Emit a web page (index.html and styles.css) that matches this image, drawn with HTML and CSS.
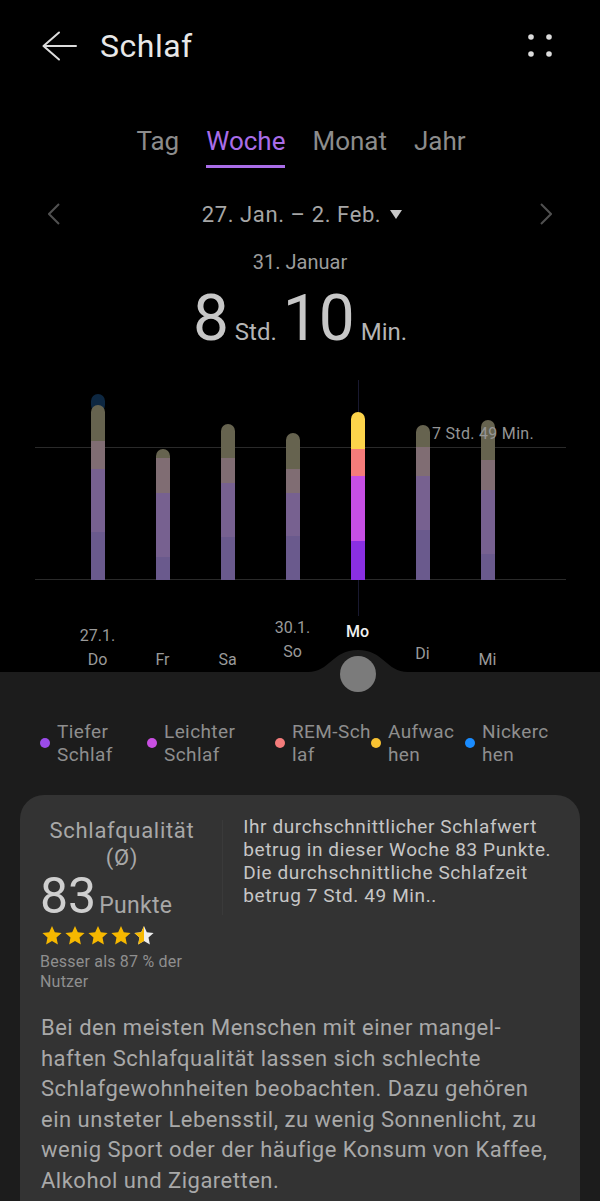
FILE: index.html
```html
<!DOCTYPE html>
<html lang="de">
<head>
    <meta charset="UTF-8">
    <meta name="viewport" content="width=device-width, initial-scale=1.0">
    <title>Schlaf</title>
    <link rel="stylesheet" href="styles.css">
</head>
<body>
    <!-- Top bar -->
    <header class="top-bar">
        <svg class="back-icon" width="36" height="32" viewBox="0 0 36 32">
            <path d="M1.5 16H34M17 2.5L1.5 16L17 29.5" fill="none" stroke="#dcdcdc" stroke-width="2" stroke-linecap="round" stroke-linejoin="round"/>
        </svg>
        <h1 class="title">Schlaf</h1>
        <svg class="menu-icon" width="24" height="24" viewBox="0 0 24 24">
            <circle cx="3" cy="3" r="2.8" fill="#dcdcdc"/>
            <circle cx="21" cy="3" r="2.8" fill="#dcdcdc"/>
            <circle cx="3" cy="20" r="2.8" fill="#dcdcdc"/>
            <circle cx="21" cy="20" r="2.8" fill="#dcdcdc"/>
        </svg>
    </header>

    <!-- Period tabs -->
    <nav class="tabs">
        <span class="tab">Tag</span>
        <span class="tab active">Woche</span>
        <span class="tab">Monat</span>
        <span class="tab">Jahr</span>
    </nav>

    <div class="range-row">
        <svg class="chevron" width="12" height="22" viewBox="0 0 12 22">
            <path d="M11 1L1 11L11 21" fill="none" stroke="#505050" stroke-width="2"/>
        </svg>
        <div class="range">27. Jan. – 2. Feb.
            <svg class="caret" width="12" height="9" viewBox="0 0 12 9"><path d="M0 0H12L6 9Z" fill="#c8c8c8"/></svg>
        </div>
        <svg class="chevron" width="12" height="22" viewBox="0 0 12 22">
            <path d="M1 1L11 11L1 21" fill="none" stroke="#505050" stroke-width="2"/>
        </svg>
    </div>

    <div class="day-date">31. Januar</div>
    <div class="duration"><span class="num">8</span><span class="unit">Std.</span><span class="num">10</span><span class="unit">Min.</span></div>

    <!-- Weekly chart -->
    <section class="chart">
        <div class="grid-line avg"></div>
        <div class="grid-line base"></div>
        <div class="cursor"></div>
        <span class="avg-label">7 Std. 49 Min.</span>

        <div class="bars">
            <div class="bar dim">
                <div class="nap"></div>
                <div class="stack">
                    <div class="seg awake" style="height:36px"></div>
                    <div class="seg rem" style="height:28px"></div>
                    <div class="seg light" style="height:63px"></div>
                    <div class="seg deep" style="height:48px"></div>
                </div>
            </div>
            <div class="bar dim">
                <div class="stack">
                    <div class="seg awake" style="height:9px"></div>
                    <div class="seg rem" style="height:35px"></div>
                    <div class="seg light" style="height:64px"></div>
                    <div class="seg deep" style="height:23px"></div>
                </div>
            </div>
            <div class="bar dim">
                <div class="stack">
                    <div class="seg awake" style="height:34px"></div>
                    <div class="seg rem" style="height:25px"></div>
                    <div class="seg light" style="height:54px"></div>
                    <div class="seg deep" style="height:43px"></div>
                </div>
            </div>
            <div class="bar dim">
                <div class="stack">
                    <div class="seg awake" style="height:36px"></div>
                    <div class="seg rem" style="height:24px"></div>
                    <div class="seg light" style="height:43px"></div>
                    <div class="seg deep" style="height:44px"></div>
                </div>
            </div>
            <div class="bar">
                <div class="stack">
                    <div class="seg awake" style="height:37px"></div>
                    <div class="seg rem" style="height:27px"></div>
                    <div class="seg light" style="height:65px"></div>
                    <div class="seg deep" style="height:39px"></div>
                </div>
            </div>
            <div class="bar dim">
                <div class="stack">
                    <div class="seg awake" style="height:22px"></div>
                    <div class="seg rem" style="height:29px"></div>
                    <div class="seg light" style="height:54px"></div>
                    <div class="seg deep" style="height:50px"></div>
                </div>
            </div>
            <div class="bar dim">
                <div class="stack">
                    <div class="seg awake" style="height:40px"></div>
                    <div class="seg rem" style="height:30px"></div>
                    <div class="seg light" style="height:64px"></div>
                    <div class="seg deep" style="height:26px"></div>
                </div>
            </div>
        </div>
    </section>

    <div class="days">
        <div class="day">27.1.<br>Do</div>
        <div class="day">Fr</div>
        <div class="day">Sa</div>
        <div class="day near">30.1.<br>So</div>
        <div class="day current">Mo</div>
        <div class="day near-right">Di</div>
        <div class="day">Mi</div>
    </div>

    <!-- Lower panel -->
    <main class="panel">
        <svg class="knob" width="100" height="50" viewBox="0 0 100 50">
            <path d="M0 24C22 24 24 2 50 2C76 2 78 24 100 24V50H0Z" fill="#1c1c1c"/>
            <circle cx="50" cy="26" r="18" fill="#7b7b7b"/>
        </svg>

        <div class="legend">
            <div class="legend-item"><span class="dot deep-dot"></span><span>Tiefer<br>Schlaf</span></div>
            <div class="legend-item"><span class="dot light-dot"></span><span>Leichter<br>Schlaf</span></div>
            <div class="legend-item"><span class="dot rem-dot"></span><span>REM-Sch<br>laf</span></div>
            <div class="legend-item"><span class="dot awake-dot"></span><span>Aufwac<br>hen</span></div>
            <div class="legend-item"><span class="dot nap-dot"></span><span>Nickerc<br>hen</span></div>
        </div>

        <div class="card">
            <div class="score-row">
                <div class="score">
                    <div class="score-title">Schlafqualität<br>(Ø)</div>
                    <div class="score-value"><span class="points">83</span><span class="points-unit">Punkte</span></div>
                    <svg class="stars" width="116" height="22" viewBox="0 0 116 22">
                        <defs>
                            <polygon id="star" points="11,1 13.8,7.3 20.6,8 15.5,12.6 16.9,19.4 11,16 5.1,19.4 6.5,12.6 1.4,8 8.2,7.3"/>
                            <clipPath id="half"><rect x="92" y="0" width="11" height="22"/></clipPath>
                        </defs>
                        <use href="#star" fill="#f6b800"/>
                        <use href="#star" x="23" fill="#f6b800"/>
                        <use href="#star" x="46" fill="#f6b800"/>
                        <use href="#star" x="69" fill="#f6b800"/>
                        <use href="#star" x="92" fill="#eeeeee"/>
                        <g clip-path="url(#half)"><use href="#star" x="92" fill="#f6b800"/></g>
                    </svg>
                    <div class="score-note">Besser als 87 % der<br>Nutzer</div>
                </div>
                <div class="divider"></div>
                <p class="summary">Ihr durchschnittlicher Schlafwert betrug in dieser Woche 83 Punkte. Die durchschnittliche Schlafzeit betrug 7 Std. 49 Min..</p>
            </div>
            <p class="advice">Bei den meisten Menschen mit einer mangel&shy;haften Schlafqualität lassen sich schlechte Schlafgewohnheiten beobachten. Dazu gehören ein unsteter Lebensstil, zu wenig Sonnenlicht, zu wenig Sport oder der häufige Konsum von Kaffee, Alkohol und Zigaretten.</p>
        </div>
    </main>
</body>
</html>
```

FILE: styles.css
```css
/* Base */
body {
    margin: 0;
    background-color: #000;
    font-family: Roboto, "Liberation Sans", sans-serif;
    color: #9a9a9a;
}

/* Top bar */
.top-bar {
    height: 92px;
    display: flex;
    align-items: center;
    padding: 0 48px 0 42px;
}

.title {
    margin: 0 0 0 22px;
    font-size: 32px;
    font-weight: 400;
    letter-spacing: 0.5px;
    color: #e8e8e8;
}

.menu-icon {
    margin-left: auto;
}

/* Tabs */
.tabs {
    display: flex;
    justify-content: center;
    gap: 27px;
    margin-top: 33px;
    padding-left: 2px;
}

.tab {
    font-size: 26px;
    line-height: 32px;
    color: #8c8c8c;
    padding-bottom: 8px;
    border-bottom: 3px solid transparent;
}

.tab.active {
    color: #a96de8;
    border-bottom-color: #a96de8;
}

/* Date range */
.range-row {
    display: flex;
    align-items: center;
    justify-content: space-between;
    margin-top: 31px;
    padding: 0 48px;
    height: 30px;
}

.range {
    font-size: 22px;
    letter-spacing: 0.6px;
    color: #a6a6a6;
    display: flex;
    align-items: center;
    gap: 9px;
    padding-left: 4px;
}

.day-date {
    margin-top: 21px;
    text-align: center;
    font-size: 20px;
    line-height: 24px;
    color: #9c9c9c;
}

.duration {
    margin-top: 10px;
    text-align: center;
    line-height: 70px;
    height: 70px;
}

.num {
    font-size: 64px;
    color: #c7c7c7;
}

.unit {
    font-size: 24px;
    color: #b5b5b5;
    margin: 0 6px;
}

.unit:last-child {
    margin-right: 0;
}

/* Chart */
.chart {
    position: relative;
    margin-top: 26px;
    height: 200px;
}

.grid-line {
    position: absolute;
    left: 35px;
    right: 34px;
    height: 1px;
    background-color: #2a2a2a;
}

.grid-line.avg {
    top: 67px;
}

.grid-line.base {
    top: 199px;
}

.cursor {
    position: absolute;
    left: 358px;
    top: 0;
    width: 1px;
    height: 236px;
    background-color: #191930;
}

.avg-label {
    position: absolute;
    left: 432px;
    top: 44px;
    font-size: 16px;
    letter-spacing: 0.3px;
    color: #959595;
    z-index: 2;
}

.bars {
    display: flex;
    align-items: flex-end;
    gap: 51px;
    height: 200px;
    padding-left: 91px;
    position: relative;
    z-index: 1;
}

.bar {
    width: 14px;
    display: flex;
    flex-direction: column;
}

.nap {
    height: 18px;
    border-radius: 7px;
    background-color: #0d2741;
    margin-bottom: -7px;
}

.stack {
    display: flex;
    flex-direction: column;
    border-radius: 7px 7px 0 0;
    overflow: hidden;
}

.seg.awake { background-color: #fdd44b; }
.seg.rem   { background-color: #f57c7a; }
.seg.light { background-color: #c64fe4; }
.seg.deep  { background-color: #8a2fe2; }

.dim .seg.awake { background-color: #66634f; }
.dim .seg.rem   { background-color: #806d73; }
.dim .seg.light { background-color: #776190; }
.dim .seg.deep  { background-color: #6a5a8d; }

/* Day labels */
.days {
    display: flex;
    align-items: flex-end;
    height: 92px;
    padding-left: 65px;
}

.day {
    width: 65px;
    text-align: center;
    font-size: 16px;
    line-height: 24px;
    color: #9a9a9a;
}

.day.near {
    padding-bottom: 8px;
}

.day.current {
    padding-bottom: 28px;
    color: #f0f0f0;
    font-weight: 500;
}

.day.near-right {
    padding-bottom: 6px;
}

/* Lower panel */
.panel {
    position: relative;
    background-color: #1c1c1c;
    padding-top: 48px;
    padding-bottom: 1px;
}

.knob {
    position: absolute;
    left: 308px;
    top: -24px;
}

.legend {
    display: grid;
    grid-template-columns: 107px 128px 96px 94px 1fr;
    padding-left: 40px;
    position: relative;
}

.legend-item {
    display: flex;
    align-items: center;
    gap: 7px;
    font-size: 19px;
    line-height: 23px;
    letter-spacing: 0.4px;
    color: #8e8e8e;
}

.dot {
    width: 10px;
    height: 10px;
    border-radius: 50%;
    flex-shrink: 0;
}

.deep-dot  { background-color: #9b4bea; }
.light-dot { background-color: #c94fe2; }
.rem-dot   { background-color: #f47c7b; }
.awake-dot { background-color: #f8c232; }
.nap-dot   { background-color: #1a8cff; }

/* Score card */
.card {
    margin: 29px 20px 0;
    background-color: #333;
    border-radius: 24px;
    padding: 20px 20px 40px;
}

.score-row {
    display: flex;
    align-items: flex-start;
}

.score {
    width: 164px;
    padding-top: 2px;
    flex-shrink: 0;
}

.score-title {
    text-align: center;
    font-size: 22px;
    line-height: 27px;
    letter-spacing: 0.7px;
    color: #a8a8a8;
}

.score-value {
    display: flex;
    align-items: baseline;
    gap: 3px;
    margin-top: 3px;
    height: 44px;
    line-height: 44px;
}

.points {
    font-size: 50px;
    color: #cfcfcf;
}

.points-unit {
    font-size: 23px;
    letter-spacing: 0.3px;
    color: #a8a8a8;
}

.stars {
    display: block;
    margin: 7px 0 0 1px;
}

.score-note {
    margin-top: 5px;
    font-size: 16px;
    line-height: 20px;
    letter-spacing: 0.2px;
    color: #8f8f8f;
}

.divider {
    width: 1px;
    height: 95px;
    margin: 5px 21px 0 18px;
    background-color: #3a3a3a;
}

.summary {
    margin: 0;
    font-size: 19px;
    line-height: 23px;
    letter-spacing: 0.6px;
    color: #c6c6c6;
}

.advice {
    margin: 21px 0 0 1px;
    font-size: 22px;
    line-height: 30.6px;
    letter-spacing: 0.5px;
    color: #a9a9a9;
    hyphens: manual;
}
```
